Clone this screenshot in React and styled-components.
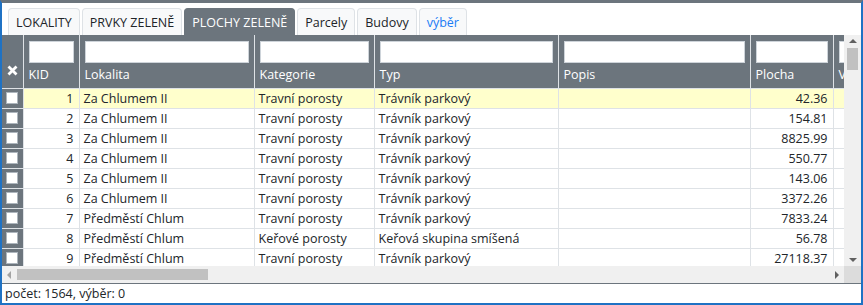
import React from 'react';
import styled, {createGlobalStyle} from 'styled-components';

const GlobalStyle = createGlobalStyle`
  html, body {
    margin: 0;
    padding: 0;
    background: #fff;
  }
  * {
    box-sizing: border-box;
  }
`;

const FONT = `"Open Sans", "Noto Sans", "Liberation Sans", sans-serif`;

const Frame = styled.div`
  position: relative;
  width: 863px;
  height: 305px;
  display: flex;
  flex-direction: column;
  border: 2px solid #1f72c4;
  border-top: 3px solid #6c757d;
  font-family: ${FONT};
  font-size: 12.5px;
  color: #212529;
  overflow: hidden;
`;

const Handle = styled.div`
  position: absolute;
  top: -2px;
  left: 420px;
  width: 20px;
  height: 1px;
  background: #fff;
`;

const TabBar = styled.div`
  display: flex;
  align-items: flex-end;
  gap: 2px;
  height: 32px;
  padding-left: 6px;
`;

const Tab = styled.div`
  height: 27px;
  padding: 0 7px;
  display: flex;
  align-items: center;
  border: 1px solid ${({$active}) => ($active ? '#6c757d' : '#dee2e6')};
  border-bottom: none;
  border-radius: 4px 4px 0 0;
  background: ${({$active}) => ($active ? '#6c757d' : '#f8f9fa')};
  color: ${({$active, $link}) => ($active ? '#fff' : $link ? '#1a7cf5' : '#212529')};
  white-space: nowrap;
`;

const Body = styled.div`
  display: flex;
  height: 231px;
`;

const Viewport = styled.div`
  flex: 1;
  overflow: hidden;
`;

const Table = styled.table`
  border-collapse: collapse;
  table-layout: fixed;
  width: 931px;
`;

const HeadCell = styled.th`
  height: 53px;
  padding: 6px 5px 0;
  vertical-align: top;
  text-align: left;
  font-weight: 400;
  color: #fff;
  background: #6c757d;
  border-right: 1px solid #dee2e6;
  border-bottom: 1px solid #dee2e6;
  white-space: nowrap;
  overflow: hidden;
`;

const SelHead = styled(HeadCell)`
  padding: 0;
  vertical-align: bottom;
  text-align: center;
`;

const FilterInput = styled.div`
  height: 22px;
  background: #fff;
  border: 1px solid #ced4da;
`;

const HeadLabel = styled.div`
  margin-top: 3px;
  line-height: 18px;
`;

const Row = styled.tr`
  background: ${({$hl}) => ($hl ? '#ffffcc' : '#fff')};
`;

const Cell = styled.td`
  height: 20px;
  padding: 0 ${({$num}) => ($num ? 5 : 4)}px 0 4px;
  text-align: ${({$num}) => ($num ? 'right' : 'left')};
  border-right: 1px solid #dee2e6;
  border-bottom: 1px solid #dee2e6;
  white-space: nowrap;
  overflow: hidden;
  line-height: 19px;
`;

const SelCell = styled.td`
  height: 20px;
  padding: 0;
  background: #6c757d;
  border-right: 1px solid #dee2e6;
  border-bottom: 1px solid #dee2e6;
`;

const Check = styled.div`
  width: 12px;
  height: 12px;
  margin: 0 auto;
  background: #fff;
  border: 1px solid #adb5bd;
`;

const VScroll = styled.div`
  width: 17px;
  display: flex;
  flex-direction: column;
  align-items: center;
  background: #f0f0f0;
  padding: 4px 0;
`;

const VThumb = styled.div`
  width: 11px;
  height: 22px;
  margin-top: 5px;
  background: #c1c1c1;
`;

const Spacer = styled.div`
  flex: 1;
`;

const BottomBar = styled.div`
  display: flex;
  height: 17px;
`;

const HScroll = styled.div`
  flex: 1;
  display: flex;
  align-items: center;
  background: #f0f0f0;
  padding: 0 5px;
`;

const HThumb = styled.div`
  width: 191px;
  height: 11px;
  margin-left: 6px;
  background: #c1c1c1;
`;

const Corner = styled.div`
  width: 17px;
  background: #dcdcdc;
`;

const Footer = styled.div`
  flex: 1;
  border-top: 1px solid #6c757d;
  padding: 0 3px;
  line-height: 19px;
`;

const Arrow = ({dir}) => {
    const pts = {
        up: '0,4 4,0 8,4',
        down: '0,0 8,0 4,4',
        left: '4,0 4,8 0,4',
        right: '0,0 0,8 4,4',
    }[dir];
    const vertical = dir === 'up' || dir === 'down';
    return (
        <svg width={vertical ? 8 : 4} height={vertical ? 4 : 8} viewBox={vertical ? '0 0 8 4' : '0 0 4 8'}>
            <polygon points={pts} fill={dir === 'left' ? '#a3a3a3' : '#606060'}/>
        </svg>
    );
};

const columns = [
    {key: 'kid', title: 'KID', width: 56},
    {key: 'lok', title: 'Lokalita', width: 175},
    {key: 'kat', title: 'Kategorie', width: 120},
    {key: 'typ', title: 'Typ', width: 184},
    {key: 'pop', title: 'Popis', width: 192},
    {key: 'pl', title: 'Plocha', width: 83},
    {key: 'vym', title: 'Výměra', width: 100},
];

const ZA = 'Za Chlumem II';
const PR = 'Předměstí Chlum';
const TP = 'Travní porosty';
const TR = 'Trávník parkový';

const rows = [
    [1, ZA, TP, TR, '42.36'],
    [2, ZA, TP, TR, '154.81'],
    [3, ZA, TP, TR, '8825.99'],
    [4, ZA, TP, TR, '550.77'],
    [5, ZA, TP, TR, '143.06'],
    [6, ZA, TP, TR, '3372.26'],
    [7, PR, TP, TR, '7833.24'],
    [8, PR, 'Keřové porosty', 'Keřová skupina smíšená', '56.78'],
    [9, PR, TP, TR, '27118.37'],
];

const tabs = [
    {label: 'LOKALITY'},
    {label: 'PRVKY ZELENĚ'},
    {label: 'PLOCHY ZELENĚ', active: true},
    {label: 'Parcely'},
    {label: 'Budovy'},
    {label: 'výběr', link: true},
];

const App = () => {
    return (
        <>
            <GlobalStyle/>
            <Frame>
                <Handle/>
                <TabBar>
                    {tabs.map(t => (
                        <Tab key={t.label} $active={t.active} $link={t.link}>{t.label}</Tab>
                    ))}
                </TabBar>
                <Body>
                    <Viewport>
                        <Table>
                            <colgroup>
                                <col style={{width: 21}}/>
                                {columns.map(c => <col key={c.key} style={{width: c.width}}/>)}
                            </colgroup>
                            <thead>
                            <tr>
                                <SelHead>
                                    <svg width="11" height="11" viewBox="0 0 11 11" style={{marginBottom: 8}}>
                                        <path d="M1.5 1.5 L9.5 9.5 M9.5 1.5 L1.5 9.5" stroke="#fff" strokeWidth="2.8"/>
                                    </svg>
                                </SelHead>
                                {columns.map(c => (
                                    <HeadCell key={c.key}>
                                        <FilterInput/>
                                        <HeadLabel>{c.title}</HeadLabel>
                                    </HeadCell>
                                ))}
                            </tr>
                            </thead>
                            <tbody>
                            {rows.map((r, i) => (
                                <Row key={r[0]} $hl={i === 0}>
                                    <SelCell><Check/></SelCell>
                                    <Cell $num>{r[0]}</Cell>
                                    <Cell>{r[1]}</Cell>
                                    <Cell>{r[2]}</Cell>
                                    <Cell>{r[3]}</Cell>
                                    <Cell/>
                                    <Cell $num>{r[4]}</Cell>
                                    <Cell $num/>
                                </Row>
                            ))}
                            </tbody>
                        </Table>
                    </Viewport>
                    <VScroll>
                        <Arrow dir="up"/>
                        <VThumb/>
                        <Spacer/>
                        <Arrow dir="down"/>
                    </VScroll>
                </Body>
                <BottomBar>
                    <HScroll>
                        <Arrow dir="left"/>
                        <HThumb/>
                        <Spacer/>
                        <Arrow dir="right"/>
                    </HScroll>
                    <Corner/>
                </BottomBar>
                <Footer>počet: 1564, výběr: 0</Footer>
            </Frame>
        </>
    );
};

export default App;
